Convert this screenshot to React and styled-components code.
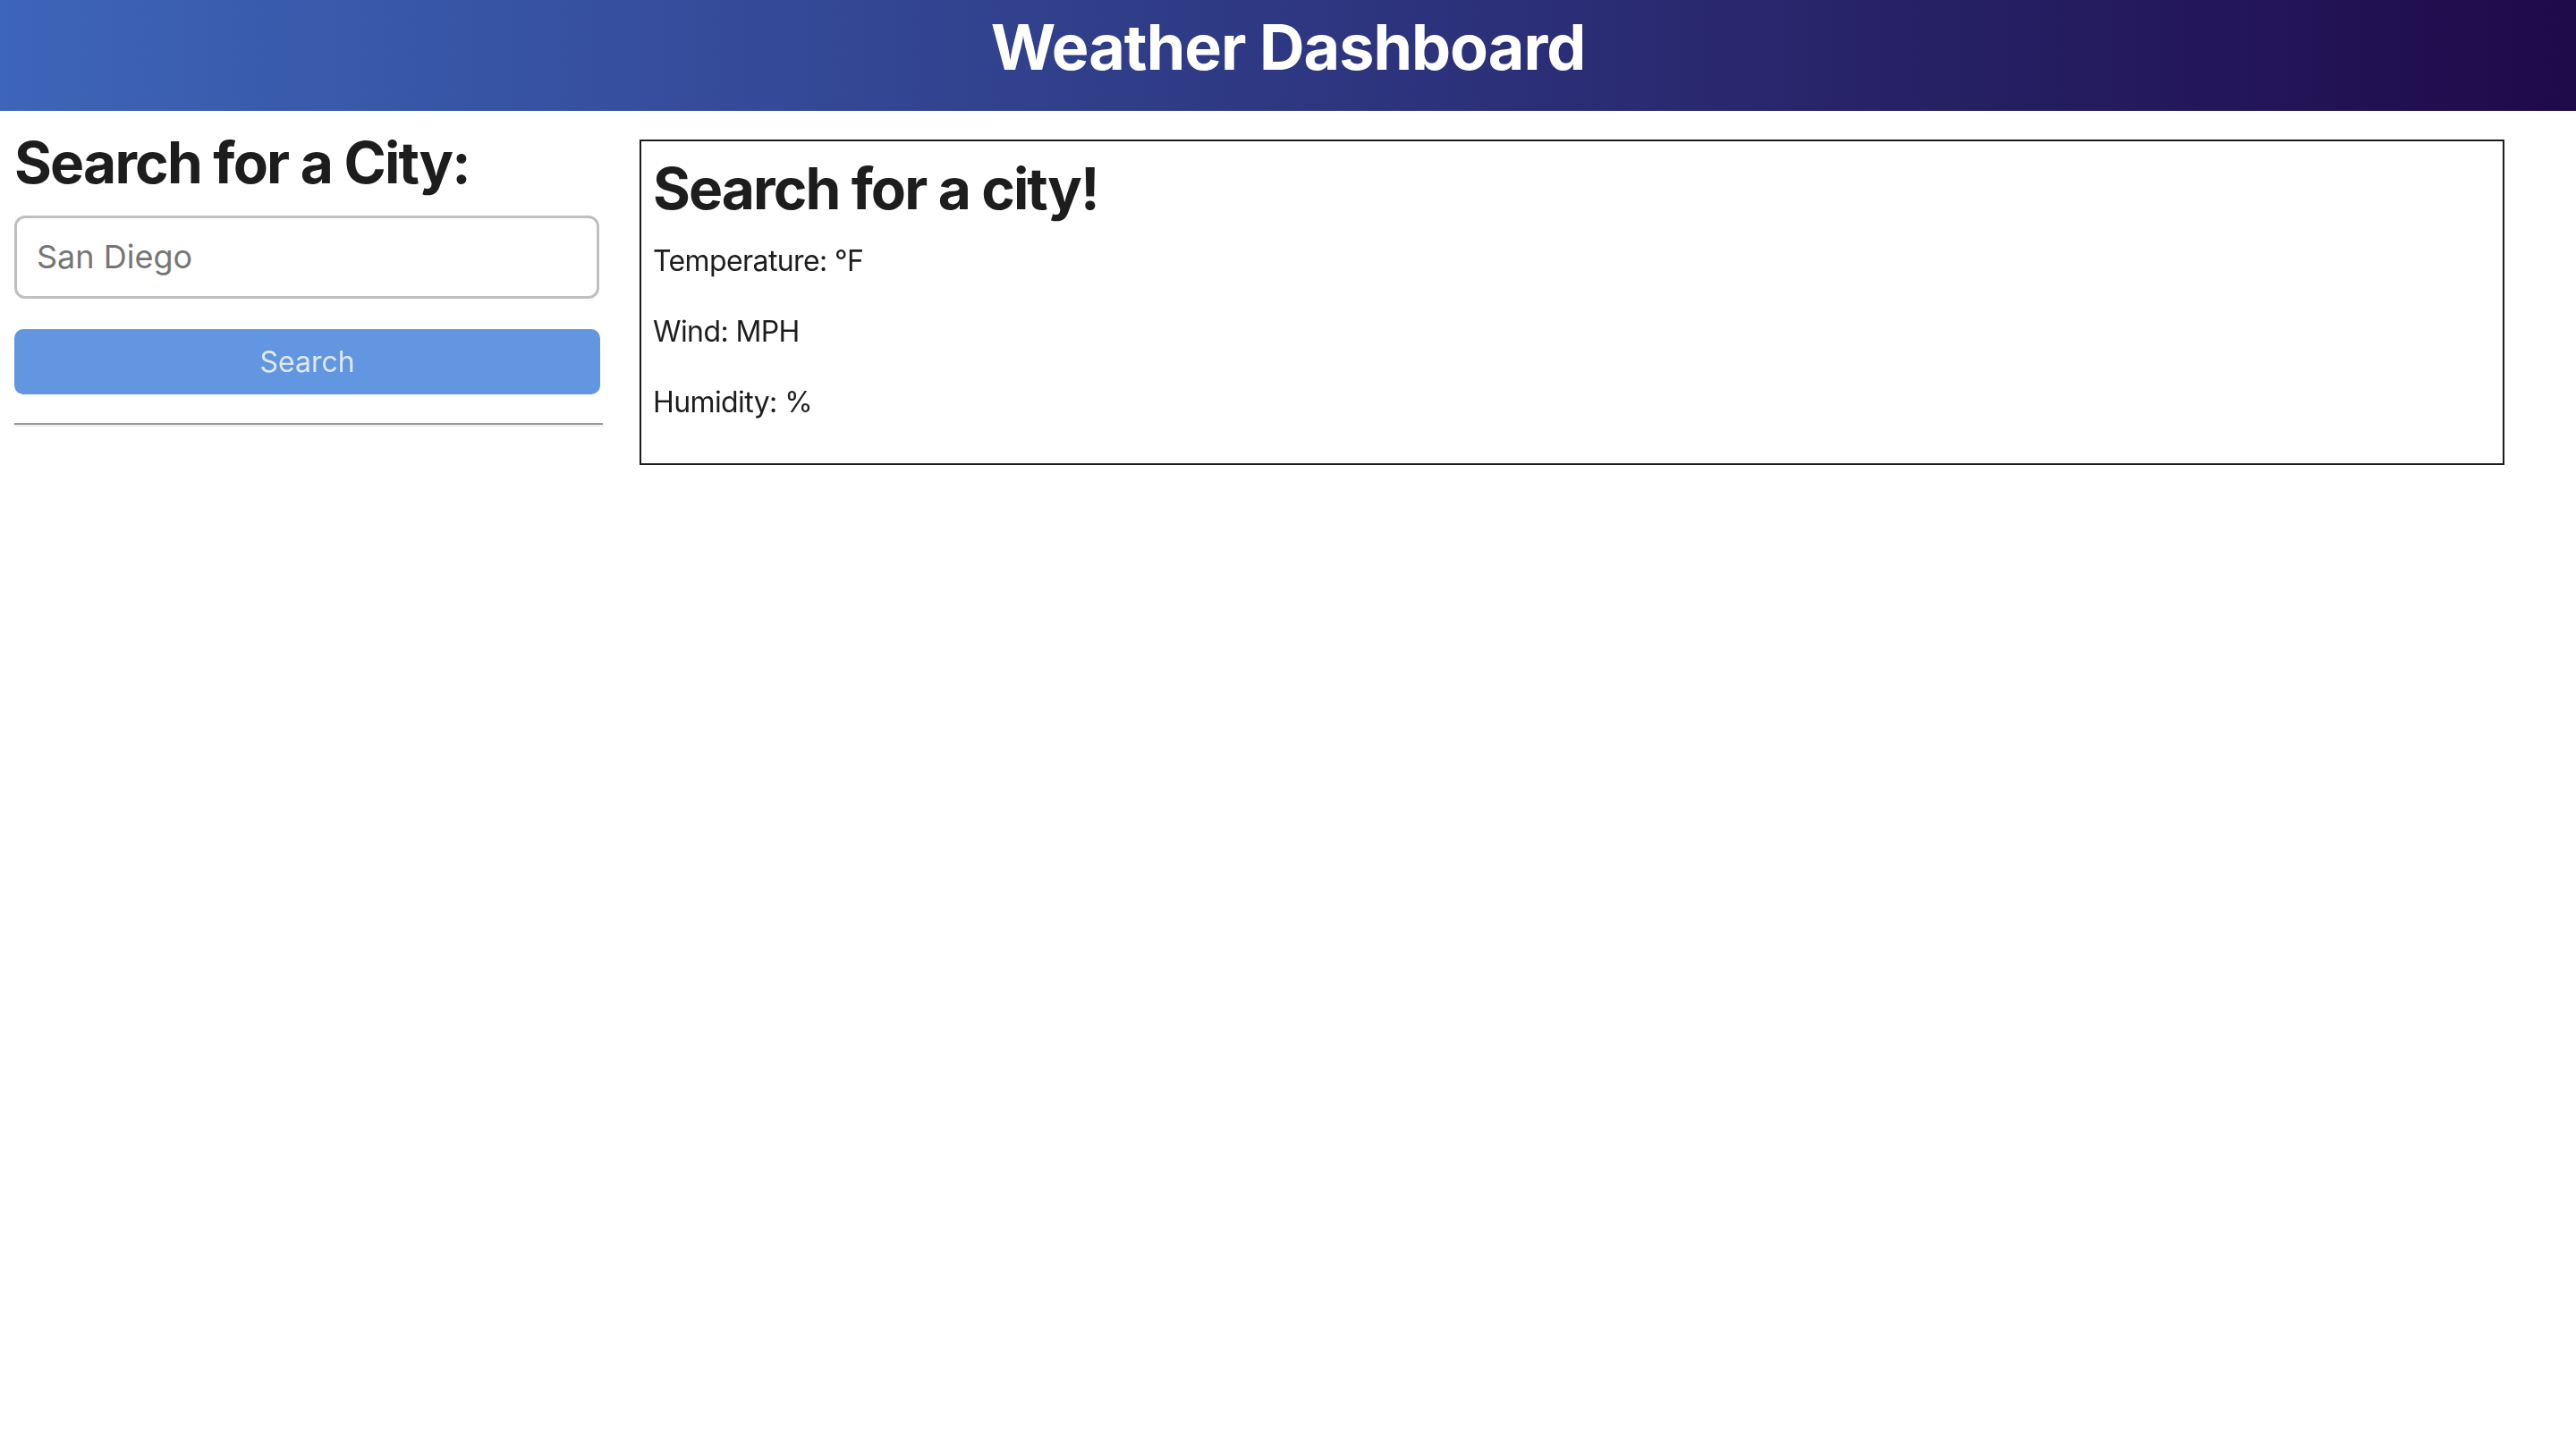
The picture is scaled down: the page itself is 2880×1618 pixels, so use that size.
import React, { useState } from "react";
import styled, { createGlobalStyle } from "styled-components";

const GlobalStyle = createGlobalStyle`
  body {
    margin: 0;
    background: #ffffff;
    color: #1d1d1d;
    font-family: Inter, "Noto Sans", "Liberation Sans", sans-serif;
  }
  * {
    box-sizing: border-box;
  }
`;

export default function App() {
  const [city, setCity] = useState("");

  const handleCity = (e) => {
    setCity(e.target.value);
  };

  return (
    <>
      <GlobalStyle />
      <Header>
        <Title>Weather Dashboard</Title>
      </Header>

      <Main>
        <Aside>
          <SideHeading>Search for a City:</SideHeading>
          <CityInput
            autoFocus
            placeholder="San Diego"
            value={city}
            onChange={handleCity}
          />
          <SearchButton type="button">Search</SearchButton>
          <Divider />
        </Aside>

        <WeatherCard>
          <CardHeading>Search for a city!</CardHeading>
          <Stat>Temperature: °F</Stat>
          <Stat>Wind: MPH</Stat>
          <Stat>Humidity: %</Stat>
        </WeatherCard>
      </Main>
    </>
  );
}

const Header = styled.header`
  height: 124px;
  padding-top: 11px;
  background: linear-gradient(to right, #3d65b9, #1f0a4a);
  text-align: center;
`;

const Title = styled.h1`
  margin: 0;
  color: #ffffff;
  font-size: 70px;
  font-weight: 700;
  line-height: 1.2;
  letter-spacing: -1px;
`;

const Main = styled.main`
  display: grid;
  grid-template-columns: 658px 2085px;
  column-gap: 41px;
  align-items: start;
  padding: 0 16px;
`;

const Aside = styled.aside`
  display: flex;
  flex-direction: column;
  padding-top: 20px;
`;

const SideHeading = styled.h2`
  margin: 0 0 20px;
  font-size: 64px;
  font-weight: 700;
  line-height: 1.2;
  letter-spacing: -1.8px;
`;

const CityInput = styled.input`
  width: 654px;
  height: 93px;
  padding: 0 22px;
  border: 3px solid #c0c0c0;
  border-radius: 12px;
  font-family: inherit;
  font-size: 36px;
  color: #1d1d1d;
  caret-color: #000000;
  outline: none;

  &::placeholder {
    color: #767676;
  }
`;

const SearchButton = styled.button`
  width: 655px;
  height: 73px;
  margin-top: 34px;
  border: none;
  border-radius: 10px;
  background-color: #6396e0;
  color: #dde8ef;
  font-family: inherit;
  font-size: 32px;
  cursor: pointer;
`;

const Divider = styled.hr`
  width: 658px;
  height: 0;
  margin: 32px 0 0;
  border: none;
  border-top: 2px solid #9a9a9a;
  border-bottom: 2px solid #ececec;
`;

const WeatherCard = styled.section`
  margin-top: 32px;
  padding: 15px 13px 13px;
  border: 2px solid #1c1c1c;
`;

const CardHeading = styled.h2`
  margin: 0 0 18px;
  font-size: 64px;
  font-weight: 700;
  line-height: 1.2;
  letter-spacing: -1.9px;
`;

const Stat = styled.p`
  margin: 0 0 31px;
  font-size: 32px;
  line-height: 48px;
  letter-spacing: -0.6px;
`;
